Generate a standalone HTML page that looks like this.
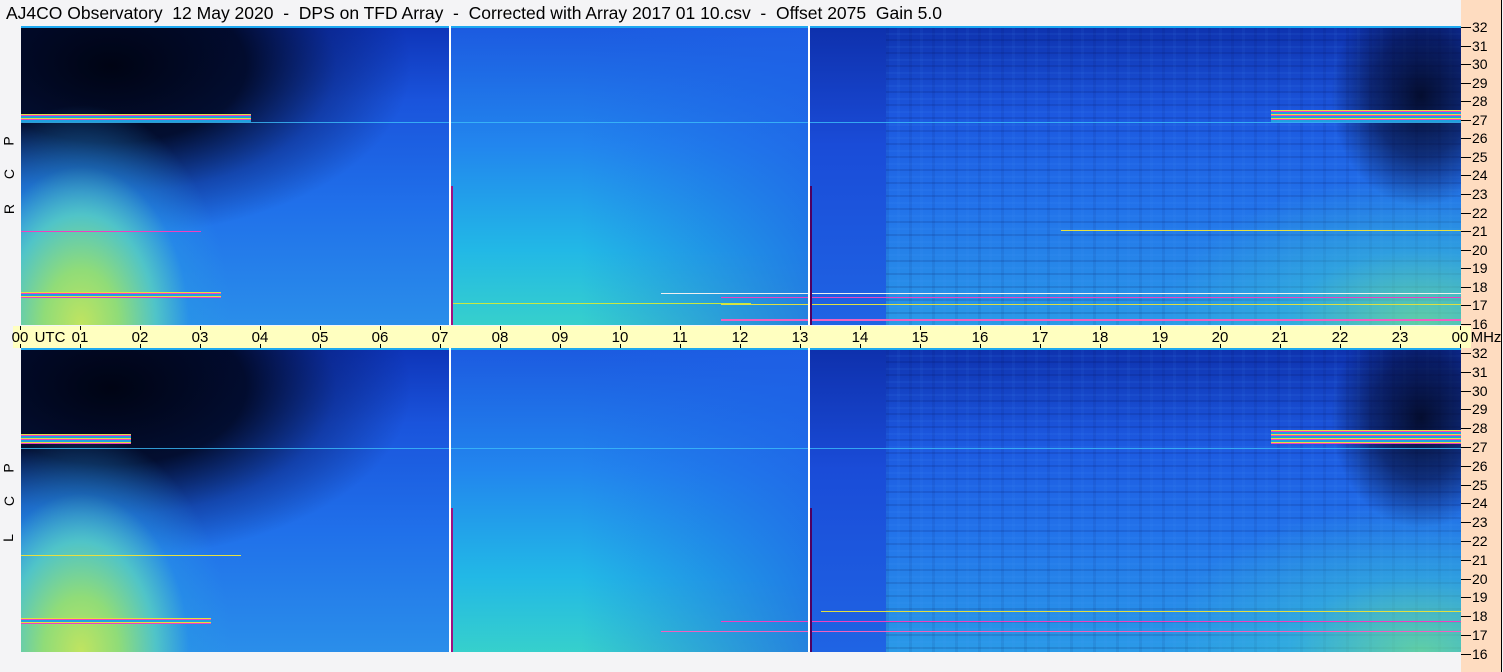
<!DOCTYPE html>
<html><head><meta charset="utf-8"><style>
*{margin:0;padding:0;box-sizing:border-box}
body{width:1503px;height:672px;background:#f4f4f6;position:relative;overflow:hidden;font-family:"Liberation Sans","DejaVu Sans",sans-serif;color:#000}
.title{position:absolute;left:6px;top:3px;font-size:17.5px;white-space:pre}
.peach{position:absolute;left:1461px;top:0;width:41px;height:672px;background:#fedcc0;border-right:1px solid #000}
.axis{position:absolute;left:13px;top:326px;width:1458px;height:22px;background:#ffffc0}
.tl{position:absolute;top:329px;font-size:15px;transform:translateX(-50%)}
.tk{position:absolute;width:1px;height:4px;background:#000}
.spec{position:absolute;left:21px;width:1440px;overflow:hidden;background:#1e64e6}
.spec div{position:absolute}
.rl{position:absolute;left:1472px;font-size:14px;line-height:14px}
.rt{position:absolute;left:1461px;width:10px;height:1px;background:#000}
.side{position:absolute;left:4px;font-size:14px;transform:rotate(-90deg)}
</style></head><body>
<div class="title">AJ4CO Observatory  12 May 2020  -  DPS on TFD Array  -  Corrected with Array 2017 01 10.csv  -  Offset 2075  Gain 5.0</div>
<div class="peach"></div>
<div id="p1" class="spec" style="top:26px;height:299px"></div>
<div id="p2" class="spec" style="top:348px;height:304px"></div>
<div class="axis"></div>
<div class="side" style="top:133px">P</div>
<div class="side" style="top:166px">C</div>
<div class="side" style="top:201px">R</div>
<div class="side" style="top:460px">P</div>
<div class="side" style="top:493px">C</div>
<div class="side" style="top:530px">L</div>
<div id="ax"></div>
<script>
function panel(H,lines){
var s='';
s+='<div style="left:0;top:0;width:1440px;height:'+H+'px;background:linear-gradient(180deg,#0e34b8 0%,#1a54dc 25%,#2070ea 60%,#2a8eea 100%)"></div>';
s+='<div style="left:428px;top:0;width:360px;height:'+H+'px;background:linear-gradient(180deg,#1c5ae0 0%,#2286ee 40%,#22b8e6 75%,#36d0cc 100%)"></div>';
s+='<div style="left:560px;top:0;width:230px;height:'+H+'px;background:linear-gradient(90deg,rgba(30,90,230,0),rgba(30,96,230,.7))"></div>';
s+='<div style="left:787px;top:0;width:80px;height:'+H+'px;background:linear-gradient(180deg,#0e30ac 0%,#1a4cd8 40%,#1f64e4 100%)"></div>';
s+='<div style="left:865px;top:0;width:575px;height:'+H+'px;background:linear-gradient(180deg,#0e32ae 0%,#1c58e0 30%,#2272ea 60%,#2a9ae8 100%)"></div>';
s+='<div style="left:865px;top:0;width:575px;height:'+H+'px;background:repeating-linear-gradient(180deg,rgba(0,0,60,.12) 0 2px,rgba(0,0,0,0) 2px 7px,rgba(80,160,255,.08) 7px 9px,rgba(0,0,0,0) 9px 13px)"></div>';
s+='<div style="left:865px;top:0;width:575px;height:'+H+'px;background:repeating-linear-gradient(90deg,rgba(0,0,60,.07) 0 3px,rgba(0,0,0,0) 3px 11px,rgba(80,160,255,.06) 11px 14px,rgba(0,0,0,0) 14px 23px)"></div>';
s+='<div style="left:1100px;top:0;width:340px;height:'+H+'px;background:radial-gradient(ellipse 260px 150px at 300px '+H+'px,rgba(110,220,150,.8) 0%,rgba(60,200,210,.4) 50%,rgba(40,150,230,0) 100%)"></div>';
s+='<div style="left:1300px;top:0;width:140px;height:'+H+'px;background:radial-gradient(ellipse 90px 110px at 100px 70px,rgba(2,6,30,.9) 0%,rgba(4,10,50,.6) 55%,rgba(10,30,120,0) 100%)"></div>';
s+='<div style="left:0;top:0;width:400px;height:230px;background:radial-gradient(ellipse 300px 170px at 90px 40px,rgba(0,4,20,1) 0%,rgba(0,6,30,.9) 45%,rgba(4,20,90,.4) 75%,rgba(10,40,160,0) 100%)"></div>';
s+='<div style="left:0;top:0;width:300px;height:'+H+'px;background:radial-gradient(ellipse 150px 220px at 60px '+H+'px,#c0e460 0%,#90dc78 25%,#50c4c8 50%,rgba(40,150,230,.5) 72%,rgba(30,100,230,0) 100%)"></div>';
s+='<div style="left:0;top:0;width:1440px;height:2px;background:#1ea8f0"></div>';
s+=lines;
s+='<div style="left:428px;top:0;width:2px;height:'+H+'px;background:#fff"></div>';
s+='<div style="left:430px;top:160px;width:2px;height:'+(H-160)+'px;background:#a01080"></div>';
s+='<div style="left:787px;top:0;width:2px;height:'+H+'px;background:#fff"></div>';
s+='<div style="left:789px;top:160px;width:2px;height:'+(H-160)+'px;background:#500060"></div>';
return s;}
function L(x,y,w,c,h){return '<div style="left:'+x+'px;top:'+y+'px;width:'+w+'px;height:'+(h||1)+'px;background:'+c+'"></div>';}
var st='repeating-linear-gradient(180deg,#e0e040 0 1px,#f040c0 1px 2px,#20a0e0 2px 4px)';
var l1=L(0,96,1440,'rgba(60,190,250,.8)')+L(0,88,230,st,8)+L(1250,84,190,st,12)+L(0,205,180,'#f040c0')+L(0,266,200,st,6)+L(640,267,800,'#f0f0f0')+L(700,271,740,'#f040c0')+L(700,278,740,'#e0e040')+L(700,293,740,'#f060c0',2)+L(430,277,300,'#c8e840')+L(1040,204,400,'#e8e040');
var l2=L(0,100,1440,'rgba(60,190,250,.8)')+L(0,86,110,st,10)+L(1250,82,190,st,14)+L(0,207,220,'#e8e040')+L(0,270,190,st,6)+L(700,273,740,'#f040c0')+L(640,283,800,'#f060c0')+L(800,263,640,'#e0e040');
document.getElementById('p1').innerHTML=panel(299,l1);
document.getElementById('p2').innerHTML=panel(304,l2);
var h='';
for(var n=0;n<=24;n++){var x=20+60*n;var l=(n%24<10?'0':'')+(n%24);
 h+='<div class="tk" style="left:'+x+'px;top:326px"></div><div class="tk" style="left:'+x+'px;top:344px"></div>';
 h+='<div class="tl" style="left:'+x+'px">'+l+'</div>';}
h+='<div class="tl" style="left:50px">UTC</div><div class="tl" style="left:1486px">MHz</div>';
for(var i=0;i<17;i++){var y1=27+i*18.56,y2=353+i*18.8;var v=32-i;
 h+='<div class="rt" style="top:'+Math.round(y1)+'px"></div><div class="rl" style="top:'+Math.round(y1-7)+'px">'+v+'</div>';
 h+='<div class="rt" style="top:'+Math.round(y2)+'px"></div><div class="rl" style="top:'+Math.round(y2-7)+'px">'+v+'</div>';}
document.getElementById('ax').innerHTML=h;
</script>
</body></html>
